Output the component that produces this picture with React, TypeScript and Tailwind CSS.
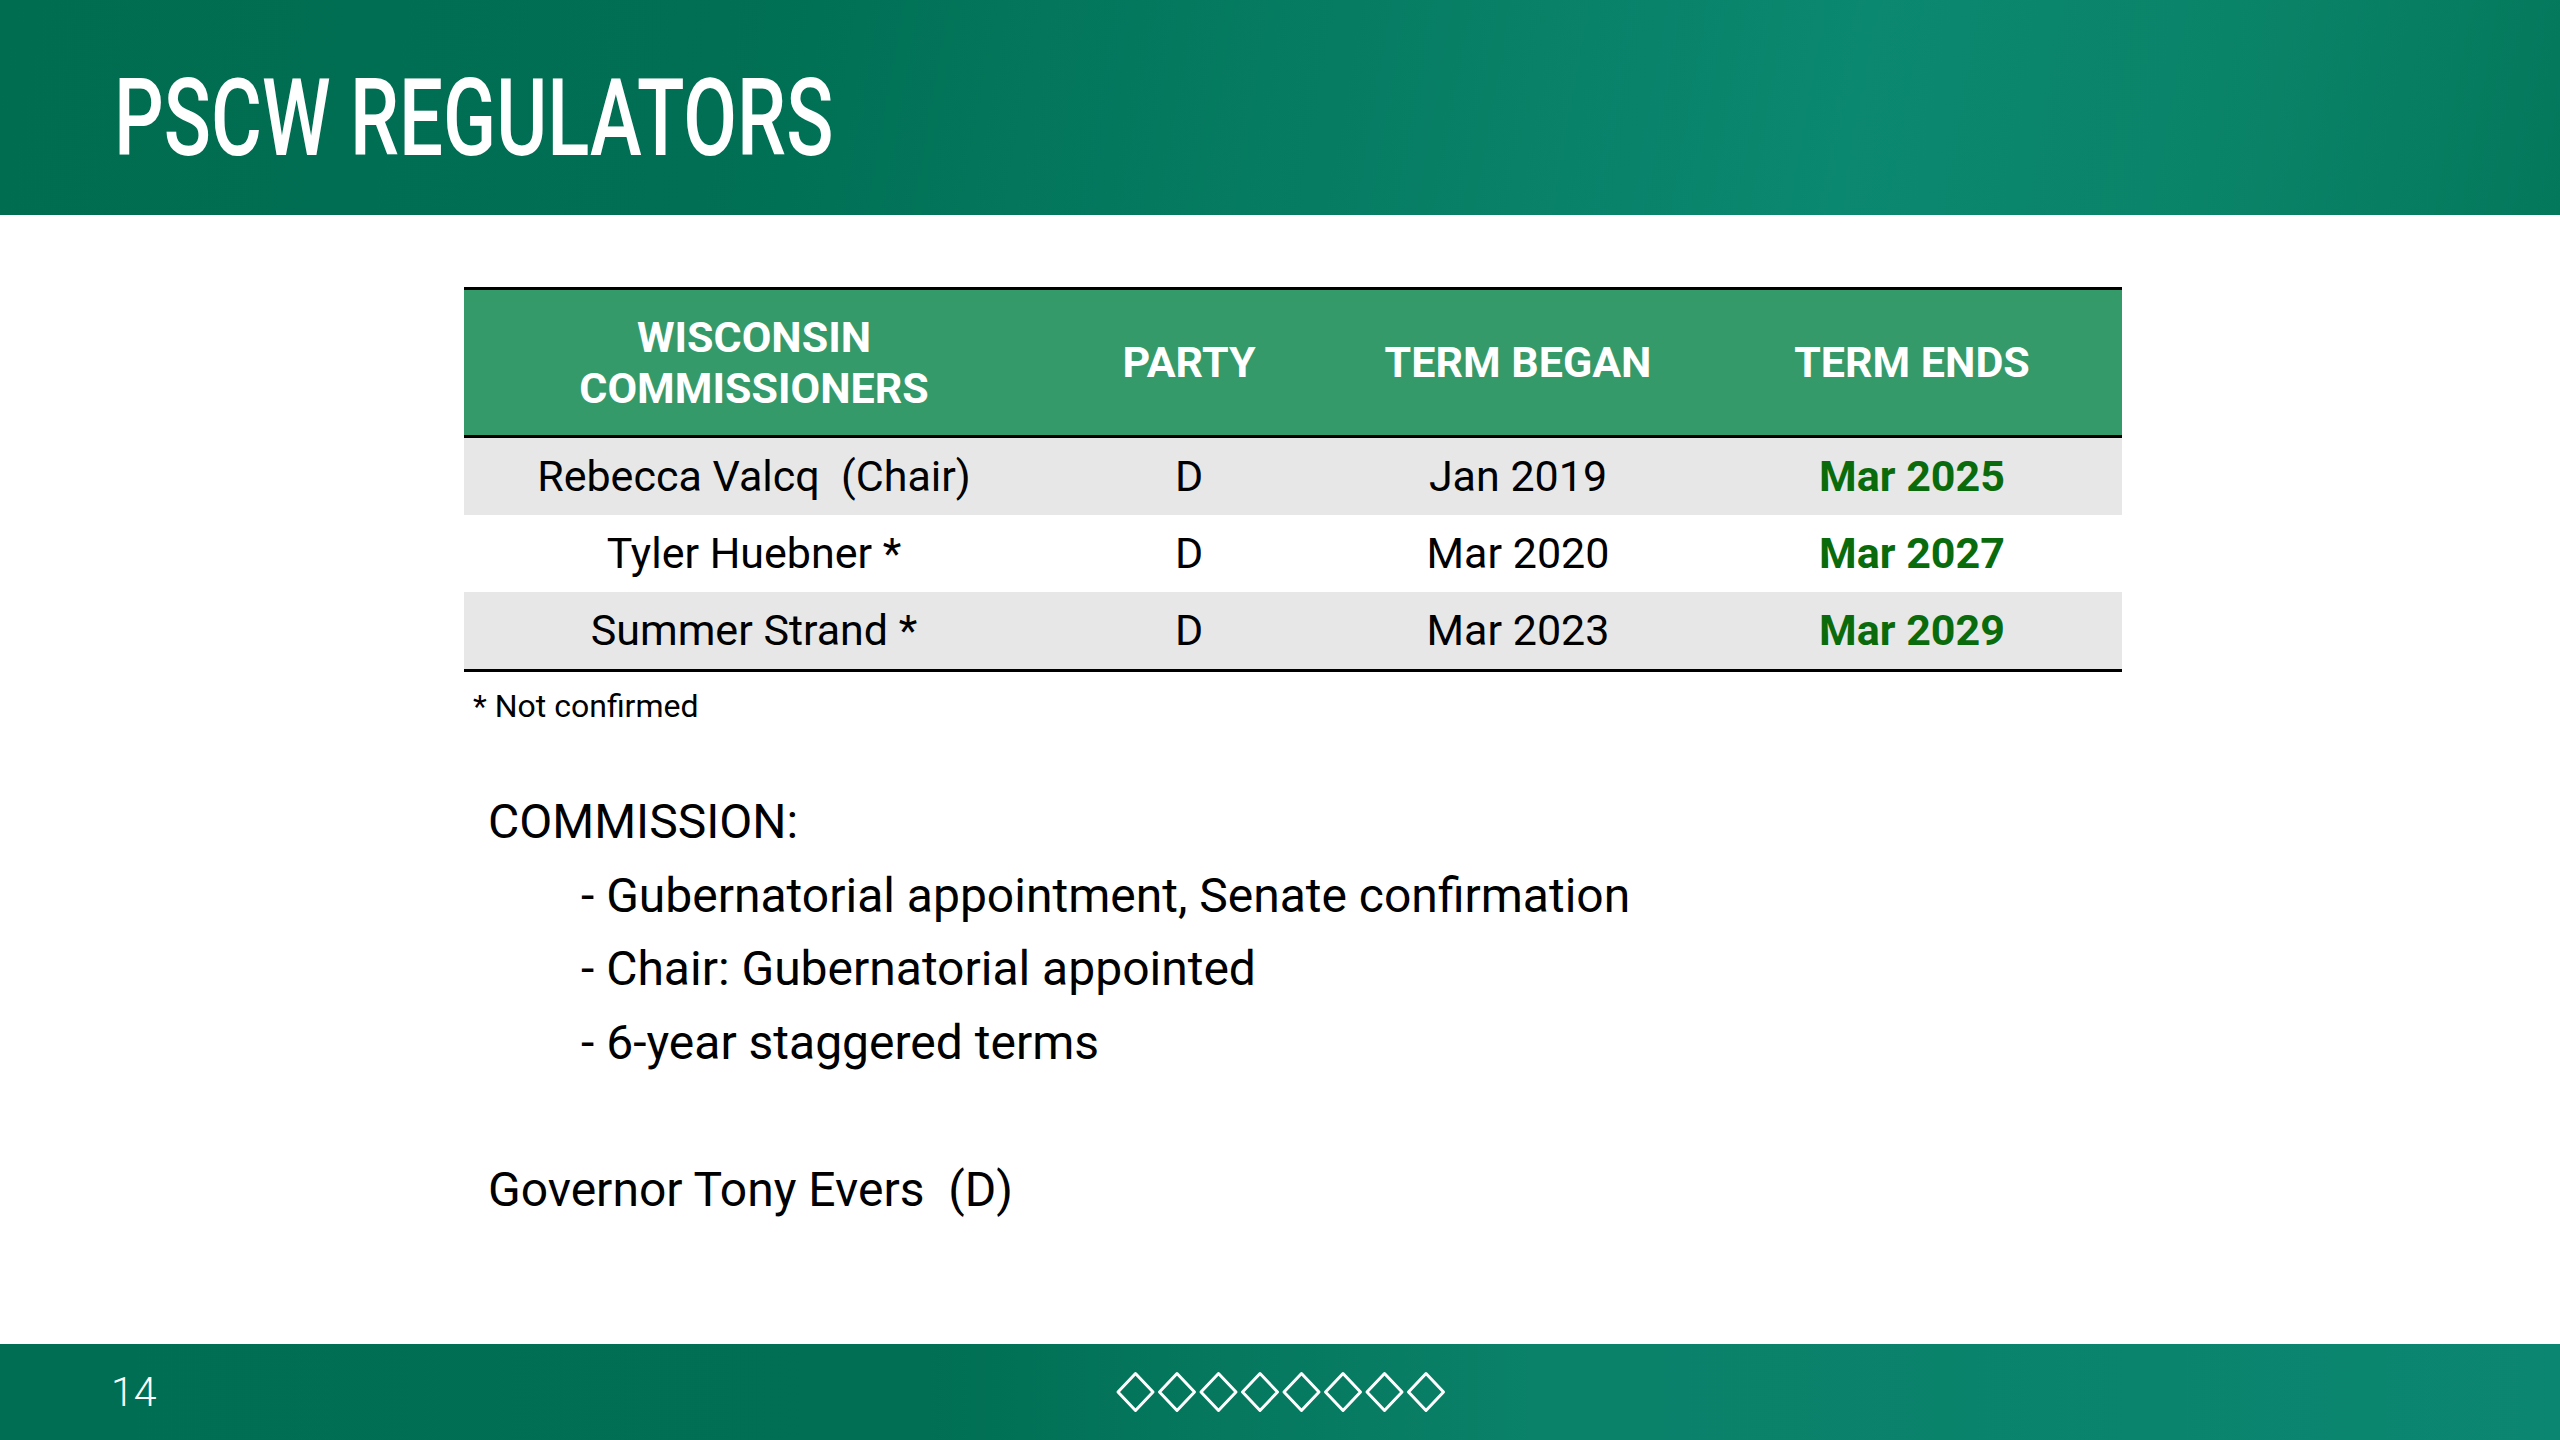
const commissioners = [
  { name: "Rebecca Valcq\u00a0\u00a0(Chair)", party: "D", began: "Jan 2019", ends: "Mar 2025", shade: true },
  { name: "Tyler Huebner *", party: "D", began: "Mar 2020", ends: "Mar 2027", shade: false },
  { name: "Summer Strand *", party: "D", began: "Mar 2023", ends: "Mar 2029", shade: true },
]

function Diamonds() {
  return (
    <svg width="334" height="42" viewBox="0 0 334 42" fill="none">
      {Array.from({ length: 8 }).map((_, i) => {
        const cx = 20.5 + i * 41.5
        return (
          <polygon
            key={i}
            points={`${cx},2.5 ${cx + 17.5},21 ${cx},39.5 ${cx - 17.5},21`}
            stroke="white"
            strokeWidth="3"
            strokeLinejoin="round"
          />
        )
      })}
    </svg>
  )
}

export default function App() {
  return (
    <div className="w-[2560px] h-[1440px] flex flex-col bg-white font-['Roboto',sans-serif] text-black overflow-hidden">
      {/* Title band */}
      <header className="h-[215px] shrink-0 bg-[linear-gradient(100deg,#006d51_0%,#006f53_28%,#0b8870_72%,#0a8469_86%,#04785b_100%)] pl-[114px] pt-[64px]">
        <h1 className="text-[108px] leading-none font-medium text-white whitespace-nowrap origin-left scale-x-[0.722]">
          PSCW REGULATORS
        </h1>
      </header>

      {/* Body */}
      <main className="flex-1 pt-[72px] pl-[464px]">
        <div className="w-[1658px]">
          <div className="grid grid-cols-[580px_290px_368px_420px] h-[151px] bg-[#359a6a] border-t-[3px] border-b-[3px] border-black items-center text-center text-white font-bold text-[43px] leading-[51px]">
            <div>WISCONSIN<br />COMMISSIONERS</div>
            <div>PARTY</div>
            <div>TERM BEGAN</div>
            <div>TERM ENDS</div>
          </div>
          {commissioners.map((c) => (
            <div
              key={c.name}
              className={`grid grid-cols-[580px_290px_368px_420px] h-[77px] items-center text-center text-[43px] leading-none ${c.shade ? "bg-[#e7e7e7]" : "bg-white"}`}
            >
              <div>{c.name}</div>
              <div>{c.party}</div>
              <div>{c.began}</div>
              <div className="font-bold text-[#0a6b0d]">{c.ends}</div>
            </div>
          ))}
          <div className="h-[3px] bg-black" />
        </div>

        <p className="mt-[15px] pl-[9px] text-[32px] leading-[38px]">* Not confirmed</p>

        <div className="mt-[60px] pl-[24px] text-[48px] leading-[73.5px]">
          <p>COMMISSION:</p>
          <div className="pl-[93px]">
            <p>- Gubernatorial appointment, Senate confirmation</p>
            <p>- Chair: Gubernatorial appointed</p>
            <p>- 6-year staggered terms</p>
          </div>
          <p className="mt-[73.5px]">Governor Tony Evers&nbsp;&nbsp;(D)</p>
        </div>
      </main>

      {/* Footer band */}
      <footer className="h-[96px] shrink-0 bg-[linear-gradient(90deg,#006e52_0%,#006f53_36%,#0a8169_60%,#0b8670_100%)] flex items-center">
        <div className="w-[1115px] pl-[111px] text-[41px] font-light text-white leading-none">14</div>
        <Diamonds />
      </footer>
    </div>
  )
}
